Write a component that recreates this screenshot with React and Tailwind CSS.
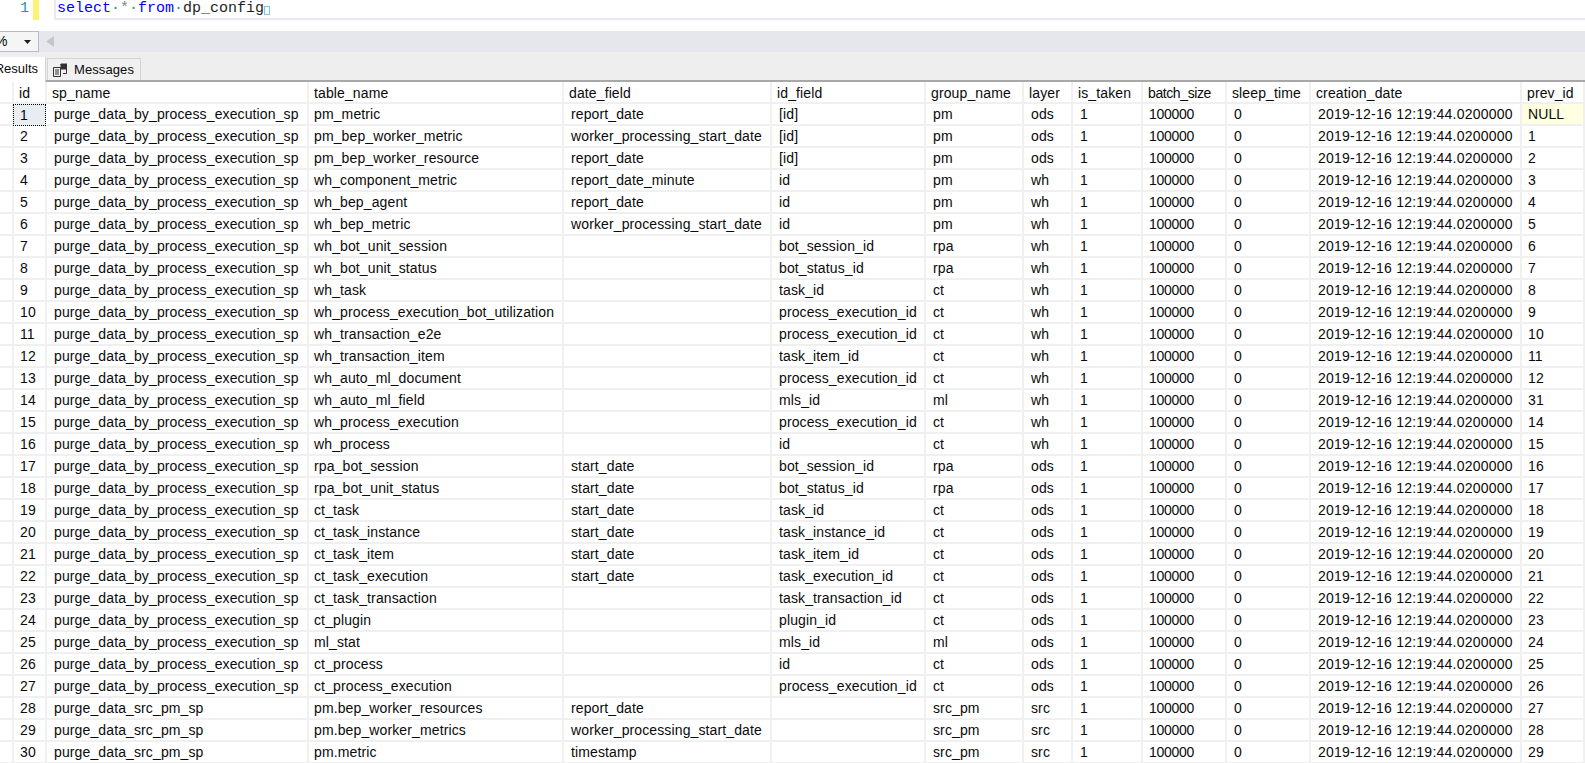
import React from 'react';

const FONT = "font-['Liberation_Sans',Arial,sans-serif]";
const SP1 = 'purge_data_by_process_execution_sp';
const SP2 = 'purge_data_src_pm_sp';

// sp_name, table_name, date_field, id_field, group_name, layer, prev_id
const rows = [
  [SP1, 'pm_metric', 'report_date', '[id]', 'pm', 'ods', 'NULL'],
  [SP1, 'pm_bep_worker_metric', 'worker_processing_start_date', '[id]', 'pm', 'ods', '1'],
  [SP1, 'pm_bep_worker_resource', 'report_date', '[id]', 'pm', 'ods', '2'],
  [SP1, 'wh_component_metric', 'report_date_minute', 'id', 'pm', 'wh', '3'],
  [SP1, 'wh_bep_agent', 'report_date', 'id', 'pm', 'wh', '4'],
  [SP1, 'wh_bep_metric', 'worker_processing_start_date', 'id', 'pm', 'wh', '5'],
  [SP1, 'wh_bot_unit_session', '', 'bot_session_id', 'rpa', 'wh', '6'],
  [SP1, 'wh_bot_unit_status', '', 'bot_status_id', 'rpa', 'wh', '7'],
  [SP1, 'wh_task', '', 'task_id', 'ct', 'wh', '8'],
  [SP1, 'wh_process_execution_bot_utilization', '', 'process_execution_id', 'ct', 'wh', '9'],
  [SP1, 'wh_transaction_e2e', '', 'process_execution_id', 'ct', 'wh', '10'],
  [SP1, 'wh_transaction_item', '', 'task_item_id', 'ct', 'wh', '11'],
  [SP1, 'wh_auto_ml_document', '', 'process_execution_id', 'ct', 'wh', '12'],
  [SP1, 'wh_auto_ml_field', '', 'mls_id', 'ml', 'wh', '31'],
  [SP1, 'wh_process_execution', '', 'process_execution_id', 'ct', 'wh', '14'],
  [SP1, 'wh_process', '', 'id', 'ct', 'wh', '15'],
  [SP1, 'rpa_bot_session', 'start_date', 'bot_session_id', 'rpa', 'ods', '16'],
  [SP1, 'rpa_bot_unit_status', 'start_date', 'bot_status_id', 'rpa', 'ods', '17'],
  [SP1, 'ct_task', 'start_date', 'task_id', 'ct', 'ods', '18'],
  [SP1, 'ct_task_instance', 'start_date', 'task_instance_id', 'ct', 'ods', '19'],
  [SP1, 'ct_task_item', 'start_date', 'task_item_id', 'ct', 'ods', '20'],
  [SP1, 'ct_task_execution', 'start_date', 'task_execution_id', 'ct', 'ods', '21'],
  [SP1, 'ct_task_transaction', '', 'task_transaction_id', 'ct', 'ods', '22'],
  [SP1, 'ct_plugin', '', 'plugin_id', 'ct', 'ods', '23'],
  [SP1, 'ml_stat', '', 'mls_id', 'ml', 'ods', '24'],
  [SP1, 'ct_process', '', 'id', 'ct', 'ods', '25'],
  [SP1, 'ct_process_execution', '', 'process_execution_id', 'ct', 'ods', '26'],
  [SP2, 'pm.bep_worker_resources', 'report_date', '', 'src_pm', 'src', '27'],
  [SP2, 'pm.bep_worker_metrics', 'worker_processing_start_date', '', 'src_pm', 'src', '28'],
  [SP2, 'pm.metric', 'timestamp', '', 'src_pm', 'src', '29'],
];

const columns = 'grid grid-cols-[14px_33px_262px_255px_208px_154px_98px_49px_70px_84px_84px_211px_63px]';
const headers = ['id', 'sp_name', 'table_name', 'date_field', 'id_field', 'group_name', 'layer', 'is_taken', 'batch_size', 'sleep_time', 'creation_date', 'prev_id'];

function Cell({ children, className = '' }) {
  return (
    <div className={`h-[22px] pl-[7px] leading-[21px] whitespace-nowrap overflow-hidden border-r-2 border-b-2 border-[#f0f0f0] ${className}`}>
      {children}
    </div>
  );
}

function Dot() {
  return <span className="text-[#2b91af]">·</span>;
}

function Editor() {
  return (
    <div className="flex h-[31px] bg-white">
      <div className="w-[33px] h-5 text-[15px] leading-[18px] text-[#2b91af] text-right pr-[4px] font-['Liberation_Mono',monospace]">1</div>
      <div className="w-[6px] h-5 bg-[#fff176]" />
      <div className="ml-[15px] flex-1 h-5 border-l-2 border-b-2 border-[#e9e9f4] pl-[1px] text-[15px] leading-[17px] text-[#1e1e1e] font-['Liberation_Mono',monospace] whitespace-nowrap flex items-start">
        <span className="text-[#0000ff]">select</span>
        <Dot />
        <span className="text-[#808080]">*</span>
        <Dot />
        <span className="text-[#0000ff]">from</span>
        <Dot />
        <span>dp_config</span>
        <span className="mt-[6px] w-[6px] h-[9px] border border-[#7fc4d8]" />
      </div>
    </div>
  );
}

function ZoomBar() {
  return (
    <div className="flex items-center h-[21px] bg-[#e6e7ec]">
      <div className="w-[39px] h-[21px] flex items-center justify-between bg-[#f5f5f5] border border-l-0 border-[#b4bccb] text-[14px] text-[#0a0a0a] pr-[7px]">
        <span className="-ml-[5px]">%</span>
        <svg width="7" height="4" viewBox="0 0 7 4"><path d="M0 0h7L3.500 4z" fill="#1e1e1e" /></svg>
      </div>
      <svg className="ml-[7px]" width="8" height="11" viewBox="0 0 8 11"><path d="M8 0v11L0 5.500z" fill="#c4c6cf" /></svg>
    </div>
  );
}

function Tabs() {
  return (
    <div className="flex items-end h-[30px] bg-[#eeeeee] border-b-2 border-[#a8a8a8] text-[13px] text-[#0a0a0a]">
      <div className="w-[46px] h-[25px] -mb-[2px] flex justify-end overflow-hidden bg-white border-r border-[#d0d0d0] pr-[7px] pt-[3px] leading-[17px] whitespace-nowrap">
        Results
      </div>
      <div className="ml-px w-[94px] h-[22px] flex items-center gap-[7px] pl-[5px] bg-[#f0f0f0] border border-b-0 border-[#d4d4d4] tracking-[0.1px]">
        <svg className="shrink-0" width="14" height="14" viewBox="0 0 14 14" fill="none" stroke="#333" strokeWidth="1">
          <path d="M.5 4.500h7v9h-7zM2 7h4M2 9h4M2 11h4" />
          <path d="M7.500 1.500h6v9h-3.500" />
          <path d="M8 1h6v5H8z" fill="#333" />
        </svg>
        Messages
      </div>
    </div>
  );
}

function ResultsGrid() {
  return (
    <div className="text-[14px] text-[#0a0a0a] tracking-[0.12px]">
      <div className={columns}>
        <div className="h-[22px] border-r-2 border-b-2 border-[#f0f0f0]" />
        {headers.map((h) => (
          <div key={h} className={`h-[22px] pl-[5px] leading-[22px] border-r-2 border-b-2 border-[#f0f0f0] whitespace-nowrap overflow-hidden ${h === 'batch_size' ? 'tracking-[-0.4px]' : ''}`}>
            {h}
          </div>
        ))}
      </div>
      {rows.map((r, i) => (
        <div key={i} className={columns}>
          <div className="h-[22px] border-r-2 border-b-2 border-[#f0f0f0]" />
          {i === 0 ? (
            <div className="h-[22px] -ml-px mr-px pl-[6px] leading-[20px] bg-[#e8edf2] border border-dotted border-black">1</div>
          ) : (
            <Cell className="!pl-[6px]">{i + 1}</Cell>
          )}
          <Cell>{r[0]}</Cell>
          <Cell className="!pl-[5px]">{r[1]}</Cell>
          <Cell>{r[2]}</Cell>
          <Cell>{r[3]}</Cell>
          <Cell>{r[4]}</Cell>
          <Cell>{r[5]}</Cell>
          <Cell>1</Cell>
          <Cell className="tracking-[-0.3px] !pl-[6px]">100000</Cell>
          <Cell>0</Cell>
          <Cell className="tracking-[0.24px]">2019-12-16 12:19:44.0200000</Cell>
          <Cell className={i === 0 ? 'bg-[#ffffe1] !pl-[6px]' : '!pl-[6px]'}>{r[6]}</Cell>
        </div>
      ))}
    </div>
  );
}

export default function App() {
  return (
    <div className={`w-[1585px] h-[763px] overflow-hidden bg-white ${FONT}`}>
      <Editor />
      <ZoomBar />
      <Tabs />
      <ResultsGrid />
    </div>
  );
}
